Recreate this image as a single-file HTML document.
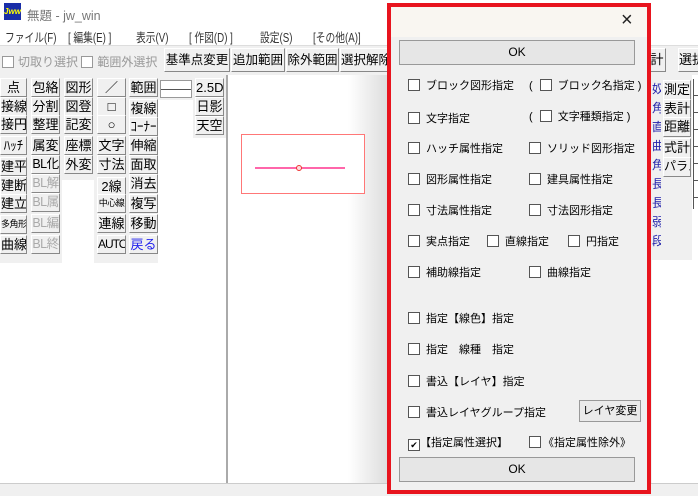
<!DOCTYPE html>
<html><head><meta charset="utf-8"><style>
*{margin:0;padding:0;box-sizing:border-box}
body{width:698px;height:496px;position:relative;overflow:hidden;background:#f0f0f0;font-family:"Liberation Sans","Noto Sans CJK JP",sans-serif;font-size:12px;color:#000}
.a{position:absolute;white-space:nowrap}
.b{position:absolute;background:#f0f0f0;border:1px solid;border-color:#fff #888 #888 #fff;text-align:center;font-size:13px;line-height:17px;height:19px;white-space:nowrap;overflow:hidden}
.cb{display:inline-block;width:12px;height:12px;border:1px solid #555;background:#fff;vertical-align:-2px;margin-right:6px;position:relative}
.row{position:absolute;font-size:11px;white-space:nowrap}
.ok{position:absolute;background:#e6e6e6;border:1px solid #999;text-align:center;font-size:12px;line-height:22px}
.m{position:absolute;top:27px;font-size:12.5px;color:#333;transform:scaleX(0.78);transform-origin:left top;white-space:nowrap}
</style></head><body>
<!-- title -->
<div class="a" style="left:0;top:0;width:698px;height:25px;background:#fff"></div>
<div class="a" style="left:4px;top:3px;width:17px;height:17px;background:#1a2ea8;color:#ff0;font-size:8px;font-style:italic;font-weight:bold;line-height:17px;text-align:center">Jww</div>
<div class="a" style="left:27px;top:5px;color:#777;font-size:12.5px">無題 - jw_win</div>
<!-- menu -->
<div class="a" style="left:0;top:25px;width:698px;height:20px;background:#fff"></div>
<div class="m" style="left:5px">ファイル(F)</div>
<div class="m" style="left:68px">[ 編集(E) ]</div>
<div class="m" style="left:136px">表示(V)</div>
<div class="m" style="left:189px">[ 作図(D) ]</div>
<div class="m" style="left:260px">設定(S)</div>
<div class="m" style="left:313px">[その他(A)]</div>
<div class="a" style="left:0;top:45px;width:698px;height:1px;background:#ddd"></div>
<!-- toolbar -->
<div class="a" style="left:2px;top:53px;color:#999;font-size:12px;white-space:nowrap"><span class="cb" style="border-color:#999;margin-right:4px"></span>切取り選択 <span class="cb" style="border-color:#999;margin-right:4px"></span>範囲外選択</div>
<div class="b" style="left:164px;top:48px;width:66px;height:24px;line-height:22px;font-size:12.5px">基準点変更</div>
<div class="b" style="left:231px;top:48px;width:54px;height:24px;line-height:22px;font-size:12.5px">追加範囲</div>
<div class="b" style="left:286px;top:48px;width:53px;height:24px;line-height:22px;font-size:12.5px">除外範囲</div>
<div class="b" style="left:340px;top:48px;width:50px;height:24px;line-height:22px;text-align:left;font-size:12.5px">選択解除</div>
<div class="b" style="left:648px;top:48px;width:18px;height:24px;line-height:22px">計</div>
<div class="b" style="left:678px;top:48px;width:24px;height:24px;line-height:22px;text-align:left">選択</div>
<!-- palette area -->
<div class="a" style="left:0;top:75px;width:226px;height:408px;background:#fff"></div>
<div class="a" style="left:0;top:75px;width:226px;height:188px;background:#f0f0f0"></div>
<div class="a" style="left:62px;top:180px;width:32px;height:83px;background:#fff"></div>
<div class="a" style="left:193px;top:138px;width:33px;height:125px;background:#fff"></div>
<div class="a" style="left:158px;top:100px;width:35px;height:163px;background:#fff"></div>
<!-- canvas -->
<div class="a" style="left:226px;top:75px;width:2px;height:408px;background:#aaa"></div>
<div class="a" style="left:228px;top:75px;width:160px;height:408px;background:linear-gradient(to right,#fff 75%,#ddd)"></div>
<div class="a" style="left:241px;top:134px;width:124px;height:60px;border:1px solid #f77;background:#fff"></div>
<div class="a" style="left:255px;top:167px;width:90px;height:2px;background:#f6a"></div>
<div class="a" style="left:296px;top:165px;width:6px;height:6px;border:1.5px solid #e33;border-radius:50%;background:#fdd"></div>
<div id="pal"></div>
<!-- status -->
<div class="a" style="left:0;top:483px;width:698px;height:13px;background:#f0f0f0;border-top:1px solid #ccc"></div>
<!-- right side -->
<div class="a" style="left:652px;top:75px;width:46px;height:408px;background:#fff"></div>
<div class="a" style="left:652px;top:75px;width:40px;height:185px;background:#f0f0f0"></div>
<div class="b" style="left:663px;top:80px;width:28px;height:20px;font-size:13px">測定</div>
<div class="b" style="left:663px;top:99px;width:28px;height:20px;font-size:13px">表計</div>
<div class="b" style="left:663px;top:117px;width:28px;height:20px;font-size:13px">距離</div>
<div class="b" style="left:663px;top:138px;width:28px;height:20px;font-size:13px">式計</div>
<div class="b" style="left:663px;top:157px;width:28px;height:20px;font-size:12px">パラメ</div>
<div class="a" style="left:693px;top:79px;width:6px;height:130px;border-left:1px solid #555;background:repeating-linear-gradient(#fff 0,#fff 16px,#555 16px,#555 17px)"></div>
<div class="a" style="left:652px;top:80px;width:9px;height:170px;color:#22a;font-size:12px;line-height:19px;overflow:hidden;white-space:normal">奴<br>角<br>直<br>曲<br>角<br>長<br>長<br>弱<br>段</div>
<!-- dialog -->
<div class="a" style="left:387px;top:3px;width:264px;height:491px;border:4px solid #e8141e;background:#f0f0f0"></div>
<div class="a" style="left:391px;top:7px;width:256px;height:30px;background:#f9f6f1"></div>
<div class="a" style="left:621px;top:9px;font-size:20px;font-weight:300;color:#222">×</div>
<div class="ok" style="left:399px;top:40px;width:236px;height:25px">OK</div>
<div class="row" style="left:408px;top:77px"><span class="cb"></span>ブロック図形指定</div>
<div class="row" style="left:529px;top:77px">( <span class="cb" style="margin-left:4px"></span>ブロック名指定 )</div>
<div class="row" style="left:408px;top:110px"><span class="cb"></span>文字指定</div>
<div class="row" style="left:529px;top:108px">( <span class="cb" style="margin-left:4px"></span>文字種類指定 )</div>
<div class="row" style="left:408px;top:140px"><span class="cb"></span>ハッチ属性指定</div>
<div class="row" style="left:529px;top:140px"><span class="cb"></span>ソリッド図形指定</div>
<div class="row" style="left:408px;top:171px"><span class="cb"></span>図形属性指定</div>
<div class="row" style="left:529px;top:171px"><span class="cb"></span>建具属性指定</div>
<div class="row" style="left:408px;top:202px"><span class="cb"></span>寸法属性指定</div>
<div class="row" style="left:529px;top:202px"><span class="cb"></span>寸法図形指定</div>
<div class="row" style="left:408px;top:233px"><span class="cb"></span>実点指定</div>
<div class="row" style="left:487px;top:233px"><span class="cb"></span>直線指定</div>
<div class="row" style="left:568px;top:233px"><span class="cb"></span>円指定</div>
<div class="row" style="left:408px;top:264px"><span class="cb"></span>補助線指定</div>
<div class="row" style="left:529px;top:264px"><span class="cb"></span>曲線指定</div>
<div class="row" style="left:408px;top:310px"><span class="cb"></span>指定【線色】指定</div>
<div class="row" style="left:408px;top:341px"><span class="cb"></span>指定　線種　指定</div>
<div class="row" style="left:408px;top:373px"><span class="cb"></span>書込【レイヤ】指定</div>
<div class="row" style="left:408px;top:404px"><span class="cb"></span>書込レイヤグループ指定</div>
<div class="ok" style="left:579px;top:400px;width:62px;height:22px;line-height:20px;font-size:11px;background:#eaeaea">レイヤ変更</div>
<div class="row" style="left:408px;top:434px"><span class="cb" style="margin-right:0;font-size:9px;line-height:10px;text-align:center">✔</span>【指定属性選択】</div>
<div class="row" style="left:529px;top:434px"><span class="cb" style="margin-right:2px"></span>《指定属性除外》</div>
<div class="ok" style="left:399px;top:457px;width:236px;height:25px">OK</div>
<script>
var cols=[[0,27,[["点",88],["接線",107],["接円",125],["ﾊｯﾁ",146],["建平",167],["建断",186],["建立",204],["多角形",225],["曲線",245]]],
[31,29,[["包絡",88],["分割",107],["整理",125],["属変",146],["BL化",165],["BL解",184,1],["BL属",203,1],["BL編",224,1],["BL終",245,1]]],
[64,29,[["図形",88],["図登",107],["記変",125],["座標",146],["外変",165]]],
[97,29,[["／",88],["□",107],["○",125],["文字",146],["寸法",165],["2線",187],["中心線",204],["連線",224],["AUTO",245]]],
[129,29,[["範囲",88],["複線",109],["ｺｰﾅｰ",127],["伸縮",146],["面取",165],["消去",184],["複写",204],["移動",224],["戻る",245,2]]],
[195,29,[["2.5D",88],["日影",107],["天空",126]]]];
var h="";cols.forEach(function(c){c[2].forEach(function(r){var t=r[0];var fs="13px",ls="0";
if(t=="多角形"||t=="中心線"){fs="9px";ls="-0.5px";}
if(t=="AUTO"){fs="12px";ls="-1px";}
if(/^BL/.test(t)){fs="12.5px";ls="-0.5px";}
h+='<div class="b" style="left:'+c[0]+'px;top:'+(r[1]-10)+'px;width:'+c[1]+'px;font-size:'+fs+';letter-spacing:'+ls+';'+(r[2]==1?'color:#aaa;':r[2]==2?'color:#22e;':'')+'">'+t+'</div>';});});
h+='<div class="a" style="left:160px;top:80px;width:32px;height:18px;background:#fff;border:1px solid #999"><div style="margin-top:8px;height:1px;background:#555"></div></div>';
document.getElementById("pal").innerHTML=h;
</script>
</body></html>
